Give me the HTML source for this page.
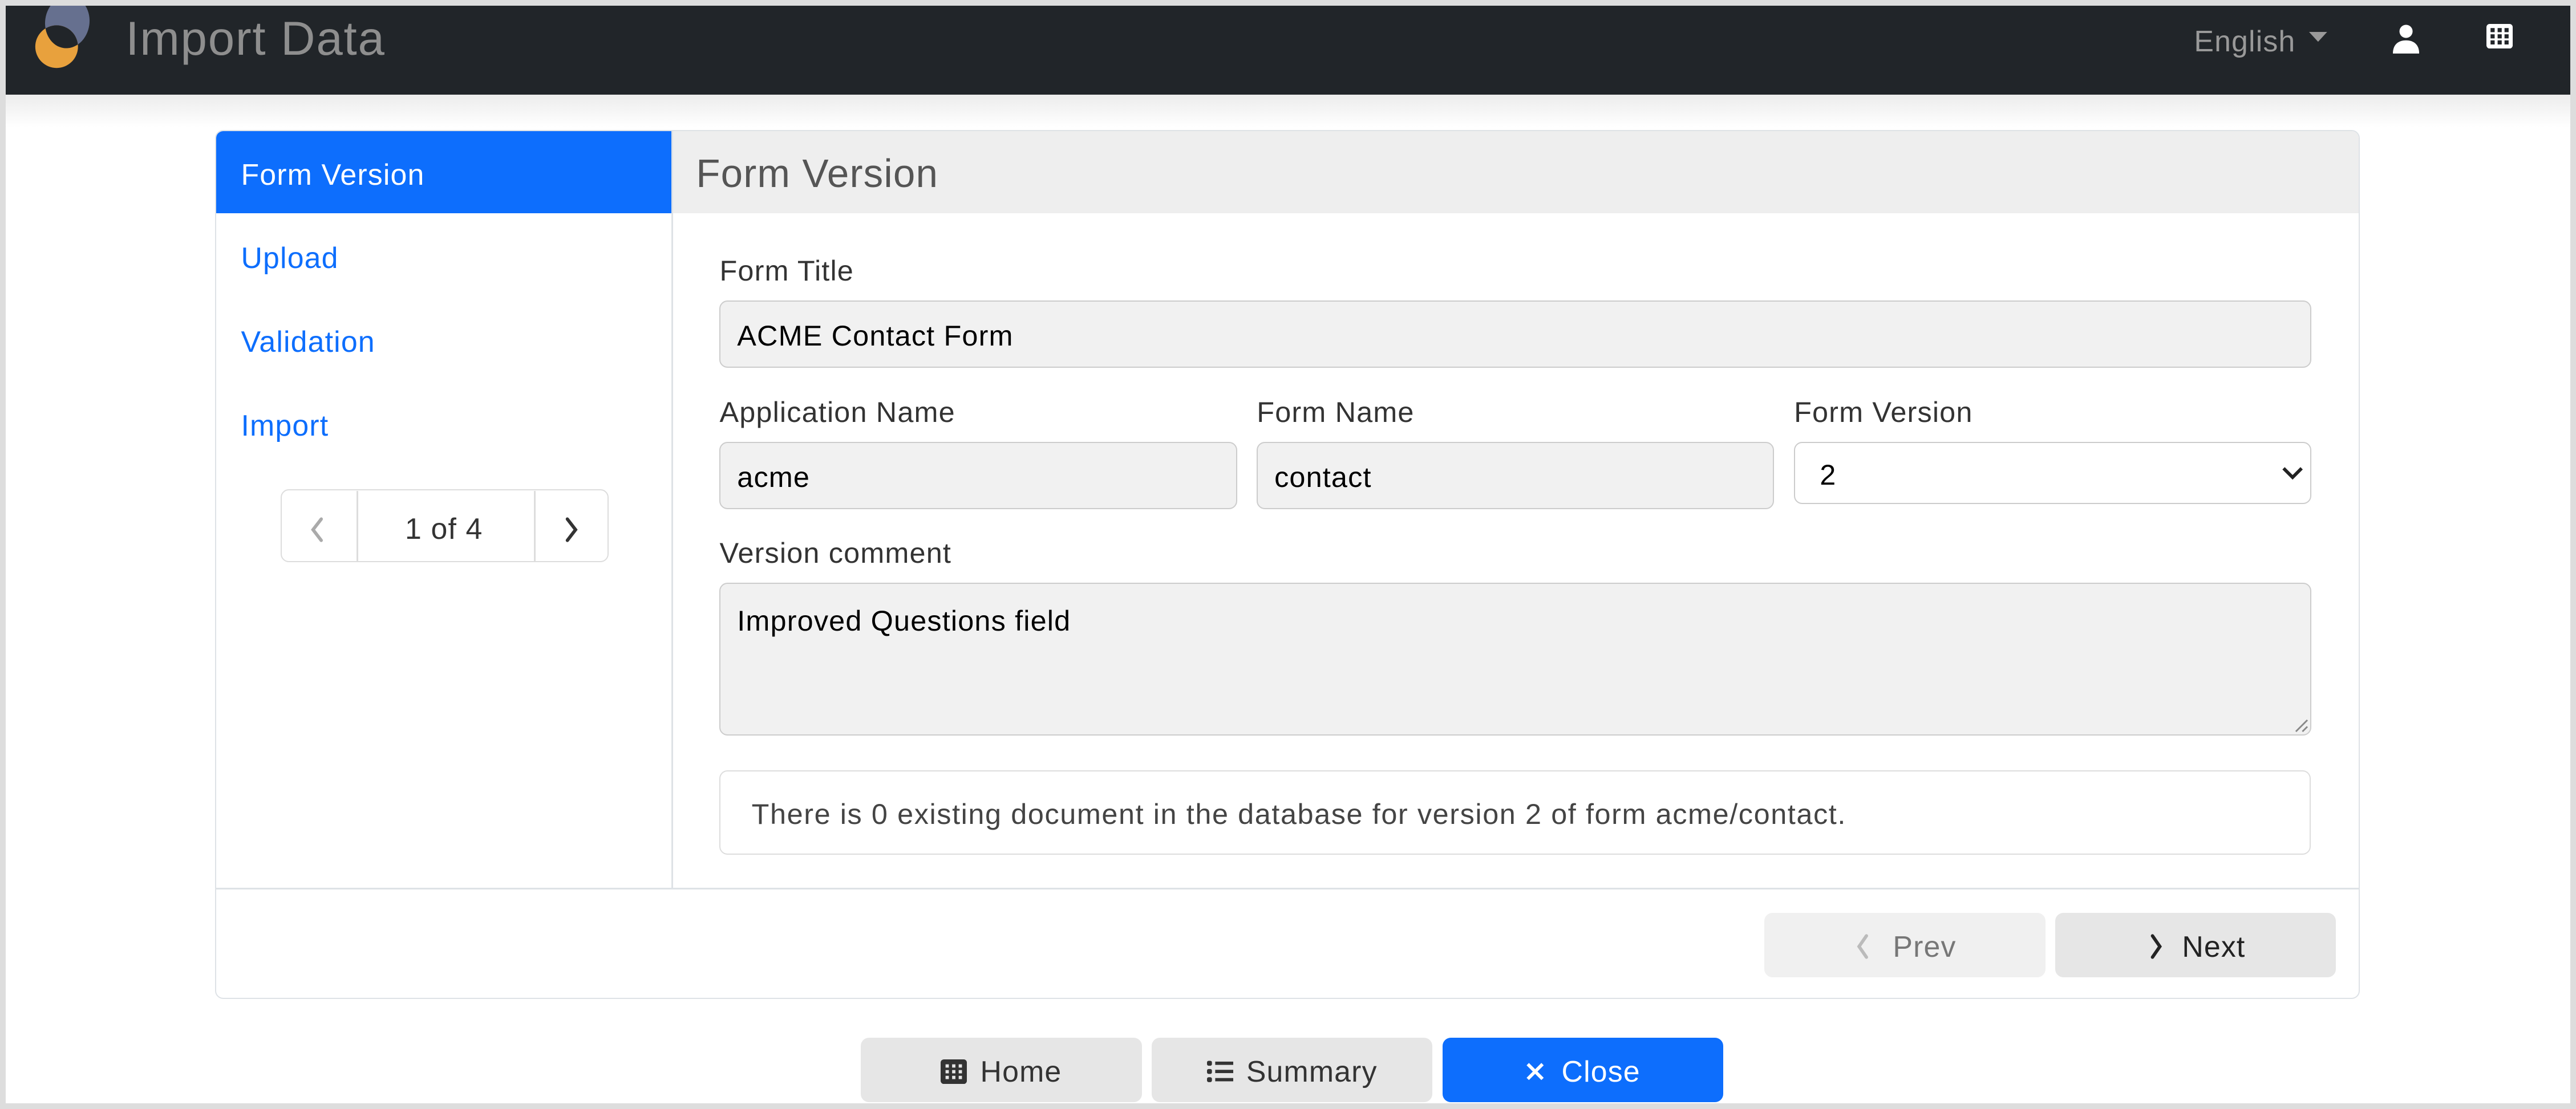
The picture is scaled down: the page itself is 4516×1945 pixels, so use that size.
<!DOCTYPE html>
<html><head><meta charset="utf-8"><style>
html,body{margin:0;padding:0}
body{width:1568px;height:675px;overflow:hidden;zoom:2.8801;background:#ddd;font-family:"Liberation Sans",sans-serif;position:relative;letter-spacing:0.4px}
.a{position:absolute}
#page{left:3.5px;top:3.5px;width:1561px;height:668.5px;background:#fff;overflow:hidden}
#nav{left:0;top:0;width:1561px;height:54px;background:#212529;overflow:hidden}
#shadow{left:0;top:54px;width:1561px;height:20px;background:linear-gradient(#ececec,#fff)}
.t{white-space:nowrap}
.card{border:1px solid #dee2e6;border-radius:5px}
.inp{background:#f1f1f1;border:1px solid #ccc;border-radius:5px;box-sizing:border-box;font-size:17.5px;color:#000;padding-left:10px;display:flex;align-items:center;padding-top:2px}
.lbl{font-size:17.5px;color:#333}
.btn{border-radius:5px;display:flex;align-items:center;justify-content:center;font-size:18px;box-sizing:border-box;padding-top:2px}
</style></head><body>
<div class="a" id="page">
 <div class="a" id="nav">
  <svg class="a" style="left:0;top:-10px" width="60" height="56" viewBox="0 -10 60 56">
   <defs><clipPath id="cb"><ellipse cx="37.5" cy="10" rx="13.5" ry="16" transform="rotate(8 37.5 10)"/></clipPath></defs>
   <ellipse cx="37.5" cy="10" rx="13.5" ry="16" transform="rotate(8 37.5 10)" fill="#66708f"/>
   <ellipse cx="31" cy="25" rx="13" ry="13" fill="#e8a13d"/>
   <ellipse cx="31" cy="25" rx="13" ry="13" fill="#212529" clip-path="url(#cb)"/>
  </svg>
  <div class="a t" style="left:73px;top:3px;font-size:29px;color:#8e8e8e;letter-spacing:0.6px">Import Data</div>
  <div class="a t" style="left:1332px;top:11px;font-size:18px;color:#999">English</div>
  <svg class="a" style="left:1402px;top:16px" width="11" height="7"><path d="M0 0H11L5.5 6Z" fill="#999"/></svg>
  <svg class="a" style="left:1453px;top:11px" width="16" height="18" viewBox="0 0 16 18"><circle cx="8" cy="4.5" r="4" fill="#fff"/><path d="M0 18C0 12 4 10 8 10S16 12 16 18Z" fill="#fff"/></svg>
  <svg class="a" style="left:1510px;top:11px" width="16" height="15" viewBox="0 0 16 15"><rect width="16" height="15" rx="2" fill="#fff"/><g fill="#212529"><rect x="2.5" y="2.5" width="2.5" height="2.5"/><rect x="6.8" y="2.5" width="2.5" height="2.5"/><rect x="11" y="2.5" width="2.5" height="2.5"/><rect x="2.5" y="6.3" width="2.5" height="2.5"/><rect x="6.8" y="6.3" width="2.5" height="2.5"/><rect x="11" y="6.3" width="2.5" height="2.5"/><rect x="2.5" y="10" width="2.5" height="2.5"/><rect x="6.8" y="10" width="2.5" height="2.5"/><rect x="11" y="10" width="2.5" height="2.5"/></g></svg>
 </div>
 <div class="a" id="shadow"></div>

 <div class="a card" style="left:127.5px;top:75.5px;width:1304px;height:528px;overflow:hidden">
  <div class="a" style="left:0;top:0;width:277px;height:50px;background:#0d6efd"></div>
  <div class="a t" style="left:15px;top:16px;font-size:18px;color:#fff">Form Version</div>
  <div class="a t" style="left:15px;top:67px;font-size:18px;color:#0d6efd">Upload</div>
  <div class="a t" style="left:15px;top:118px;font-size:18px;color:#0d6efd">Validation</div>
  <div class="a t" style="left:15px;top:169px;font-size:18px;color:#0d6efd">Import</div>
  <div class="a" style="left:277px;top:0;width:1px;height:461px;background:#dee2e6"></div>
  <div class="a" style="left:278px;top:0;width:1026px;height:50px;background:#eee"></div>
  <div class="a t" style="left:292px;top:12px;font-size:24px;color:#555">Form Version</div>
  <div class="a" style="left:0;top:461px;width:1304px;height:1px;background:#dee2e6"></div>
 </div>

 <!-- pager -->
 <div class="a" style="left:167.5px;top:294.5px;width:198px;height:43px;border:1px solid #ddd;border-radius:5px"></div>
 <div class="a" style="left:213.5px;top:295.5px;width:1px;height:43px;background:#ddd"></div>
 <div class="a" style="left:321.5px;top:295.5px;width:1px;height:43px;background:#ddd"></div>
 <svg class="a" style="left:185px;top:311px" width="10" height="16"><path d="M7 1.5L2 8L7 14.5" stroke="#aaa" stroke-width="2" fill="none" stroke-linecap="round"/></svg>
 <div class="a t" style="left:243px;top:308px;font-size:18px;color:#333">1 of 4</div>
 <svg class="a" style="left:339px;top:311px" width="10" height="16"><path d="M3 1.5L8 8L3 14.5" stroke="#333" stroke-width="2" fill="none" stroke-linecap="round"/></svg>

 <!-- form -->
 <div class="a t lbl" style="left:434.5px;top:151px">Form Title</div>
 <div class="a inp" style="left:434.5px;top:179.5px;width:969px;height:41px">ACME Contact Form</div>
 <div class="a t lbl" style="left:434.5px;top:237px">Application Name</div>
 <div class="a t lbl" style="left:761.5px;top:237px">Form Name</div>
 <div class="a t lbl" style="left:1088.5px;top:237px">Form Version</div>
 <div class="a inp" style="left:434.5px;top:265.5px;width:315px;height:41px">acme</div>
 <div class="a inp" style="left:761.5px;top:265.5px;width:315px;height:41px">contact</div>
 <div class="a inp" style="left:1088.5px;top:265.5px;width:315px;height:38px;background:#fff;padding-left:15px">2</div>
 <svg class="a" style="left:1385px;top:280px" width="14" height="9"><path d="M1.5 1.5L7 7L12.5 1.5" stroke="#222" stroke-width="2" fill="none"/></svg>
 <div class="a t lbl" style="left:434.5px;top:323px">Version comment</div>
 <div class="a inp" style="left:434.5px;top:351.5px;width:969px;height:93px;align-items:flex-start;padding-top:12px">Improved Questions field</div>
 <svg class="a" style="left:1393px;top:434px" width="9" height="9"><path d="M8 1L1 8M8 5L5 8" stroke="#888" stroke-width="1"/></svg>
 <div class="a" style="left:434.5px;top:465.5px;width:967px;height:50px;border:1px solid #ddd;border-radius:5px"></div>
 <div class="a t" style="left:454px;top:482px;font-size:17.5px;color:#444;letter-spacing:0.55px">There is 0 existing document in the database for version 2 of form acme/contact.</div>

 <div class="a btn" style="left:1070.5px;top:552.5px;width:171px;height:39px;background:#f0f0f0;color:#777"><svg width="12" height="16" style="margin-right:12px"><path d="M8 1.5L3.5 8L8 14.5" stroke="#bbb" stroke-width="2" fill="none" stroke-linecap="round"/></svg>Prev</div>
 <div class="a btn" style="left:1247.5px;top:552.5px;width:171px;height:39px;background:#e6e6e6;color:#222"><svg width="12" height="16" style="margin-right:10px"><path d="M4 1.5L8.5 8L4 14.5" stroke="#222" stroke-width="2" fill="none" stroke-linecap="round"/></svg>Next</div>

 <div class="a btn" style="left:520.5px;top:628.5px;width:171px;height:39px;background:#e6e6e6;color:#333"><svg width="16" height="15" viewBox="0 0 16 15" style="margin-right:8px"><rect width="16" height="15" rx="2" fill="#333"/><g fill="#e6e6e6"><rect x="3" y="3" width="2" height="2"/><rect x="7" y="3" width="2" height="2"/><rect x="11" y="3" width="2" height="2"/><rect x="3" y="6.5" width="2" height="2"/><rect x="7" y="6.5" width="2" height="2"/><rect x="11" y="6.5" width="2" height="2"/><rect x="3" y="10" width="2" height="2"/><rect x="7" y="10" width="2" height="2"/><rect x="11" y="10" width="2" height="2"/></g></svg>Home</div>
 <div class="a btn" style="left:697.5px;top:628.5px;width:171px;height:39px;background:#e6e6e6;color:#333"><svg width="16" height="14" viewBox="0 0 16 14" style="margin-right:8px"><g fill="#333"><rect x="0" y="0.5" width="3" height="3" rx="1"/><rect x="0" y="5.5" width="3" height="3" rx="1"/><rect x="0" y="10.5" width="3" height="3" rx="1"/><rect x="5" y="1" width="11" height="2"/><rect x="5" y="6" width="11" height="2"/><rect x="5" y="11" width="11" height="2"/></g></svg>Summary</div>
 <div class="a btn" style="left:874.5px;top:628.5px;width:171px;height:39px;background:#0d6efd;color:#fff"><svg width="12" height="12" style="margin-right:10px"><path d="M1.5 1.5L10.5 10.5M10.5 1.5L1.5 10.5" stroke="#fff" stroke-width="2"/></svg>Close</div>
</div>
</body></html>
